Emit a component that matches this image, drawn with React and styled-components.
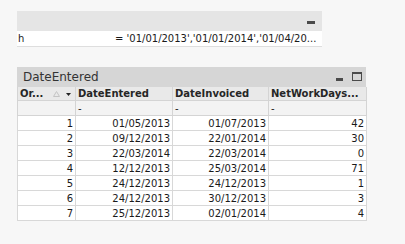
import React from "react";
import styled, { createGlobalStyle } from "styled-components";

const GlobalStyle = createGlobalStyle`
  body {
    margin: 0;
    background: #f7f7f7;
    font-family: "DejaVu Sans", Verdana, sans-serif;
    color: #1a1a1a;
  }
`;

const Page = styled.div`
  display: flex;
  flex-direction: column;
  align-items: flex-start;
  gap: 20px;
  padding: 11px 0 0 17px;
`;

const SelectBox = styled.div`
  width: 305px;
  background: #fff;
  border-bottom: 1px solid #dedede;
`;

const SelectHeader = styled.div`
  height: 20px;
  background: #e5e5e5;
  display: flex;
  justify-content: flex-end;
  align-items: flex-end;
  padding: 0 7px 7px 0;
  box-sizing: border-box;
`;

const Minus = styled.span`
  display: block;
  width: ${(p) => p.w || 8}px;
  height: 3px;
  background: #4a4a4a;
`;

const SelectRow = styled.div`
  height: 15px;
  display: flex;
  align-items: center;
  font-size: 10px;
  white-space: nowrap;
`;

const Field = styled.span`
  width: 97px;
  padding-left: 1px;
`;

const Value = styled.span`
  flex: 1;
  overflow: hidden;
`;

const Panel = styled.div`
  width: 349px;
  background: #fff;
`;

const Caption = styled.div`
  height: 20px;
  background: #d6d6d6;
  display: flex;
  align-items: center;
  padding: 0 4px 0 6px;
  box-sizing: border-box;
  font-size: 12px;
  color: #333;
`;

const CaptionText = styled.span`
  flex: 1;
`;

const CaptionIcons = styled.div`
  display: flex;
  align-items: flex-end;
  gap: 9px;
  align-self: flex-end;
  padding-bottom: 6px;
`;

const MaxBox = styled.span`
  display: block;
  width: 10px;
  height: 9px;
  box-sizing: border-box;
  border: 1px solid #4a4a4a;
  border-top-width: 2px;
`;

const Grid = styled.table`
  border-collapse: collapse;
  width: 349px;
  table-layout: fixed;
  font-size: 10px;
`;

const HeadCell = styled.th`
  height: 13px;
  padding: 0 2px;
  background: #e9e9e9;
  border: 1px solid #d4d4d4;
  border-top: none;
  text-align: left;
  font-weight: bold;
  color: #262626;
  white-space: nowrap;
  overflow: hidden;
  position: relative;
`;

const FilterCell = styled.td`
  height: 14px;
  padding: 0 2px;
  background: #f3f3f3;
  border: 1px solid #d4d4d4;
`;

const Cell = styled.td`
  height: 14px;
  padding: 0 2px;
  border: 1px solid #d8d8d8;
  text-align: right;
  white-space: nowrap;
`;

const SortIcons = styled.span`
  position: absolute;
  right: 4px;
  top: 4px;
  display: flex;
  align-items: center;
  gap: 6px;
`;

const rows = [
  [1, "01/05/2013", "01/07/2013", 42],
  [2, "09/12/2013", "22/01/2014", 30],
  [3, "22/03/2014", "22/03/2014", 0],
  [4, "12/12/2013", "25/03/2014", 71],
  [5, "24/12/2013", "24/12/2013", 1],
  [6, "24/12/2013", "30/12/2013", 3],
  [7, "25/12/2013", "02/01/2014", 4],
];

export default function App() {
  return (
    <Page>
      <GlobalStyle />
      <SelectBox>
        <SelectHeader>
          <Minus />
        </SelectHeader>
        <SelectRow>
          <Field>h</Field>
          <Value>= '01/01/2013','01/01/2014','01/04/20...</Value>
        </SelectRow>
      </SelectBox>

      <Panel>
        <Caption>
          <CaptionText>DateEntered</CaptionText>
          <CaptionIcons>
            <Minus w={7} />
            <MaxBox />
          </CaptionIcons>
        </Caption>
        <Grid>
          <colgroup>
            <col style={{ width: 58 }} />
            <col style={{ width: 97 }} />
            <col style={{ width: 96 }} />
            <col style={{ width: 98 }} />
          </colgroup>
          <thead>
            <tr>
              <HeadCell>
                Or...
                <SortIcons>
                  <svg width="7" height="6" viewBox="0 0 7 6">
                    <path d="M3.5 0.5 L6.5 5.5 L0.5 5.5 Z" fill="none" stroke="#c4c4c4" strokeWidth="1" />
                  </svg>
                  <svg width="5" height="3" viewBox="0 0 5 3">
                    <path d="M0 0 H5 L2.5 3 Z" fill="#222" />
                  </svg>
                </SortIcons>
              </HeadCell>
              <HeadCell>DateEntered</HeadCell>
              <HeadCell>DateInvoiced</HeadCell>
              <HeadCell>NetWorkDays...</HeadCell>
            </tr>
            <tr>
              <FilterCell />
              <FilterCell>-</FilterCell>
              <FilterCell>-</FilterCell>
              <FilterCell>-</FilterCell>
            </tr>
          </thead>
          <tbody>
            {rows.map((r) => (
              <tr key={r[0]}>
                {r.map((v, i) => (
                  <Cell key={i}>{v}</Cell>
                ))}
              </tr>
            ))}
          </tbody>
        </Grid>
      </Panel>
    </Page>
  );
}
